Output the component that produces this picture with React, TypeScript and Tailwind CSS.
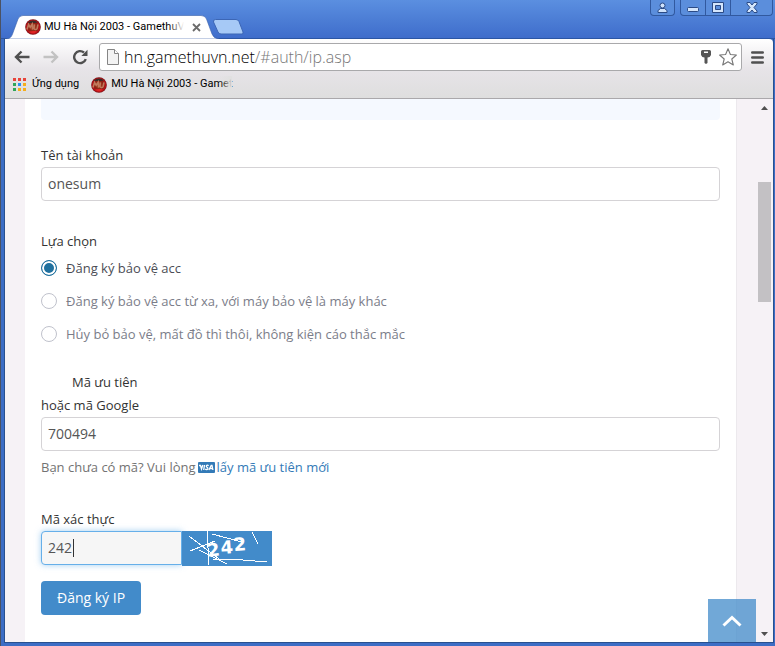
import { useState } from 'react'
import type { ReactNode } from 'react'

const OPTIONS = [
  'Đăng ký bảo vệ acc',
  'Đăng ký bảo vệ acc từ xa, với máy bảo vệ là máy khác',
  'Hủy bỏ bảo vệ, mất đồ thì thôi, không kiện cáo thắc mắc',
]

const APP_DOTS = [
  '#e8443a', '#e8443a', '#e8443a',
  '#2fa558', '#2b8ff0', '#f5ae1c',
  '#2fa558', '#f5ae1c', '#f5ae1c',
]

function SiteIcon() {
  return (
    <svg width="16" height="16" viewBox="0 0 16 16" className="shrink-0" aria-hidden="true">
      <defs>
        <radialGradient id="ember" cx="50%" cy="50%" r="50%">
          <stop offset="0" stopColor="#b04a20" />
          <stop offset="0.6" stopColor="#8a2014" />
          <stop offset="0.85" stopColor="#b8141a" />
          <stop offset="1" stopColor="#6e0c10" />
        </radialGradient>
      </defs>
      <circle cx="8" cy="8" r="7.8" fill="url(#ember)" />
      <path d="M2.500 4C5 .8 10 .6 13 3.500 10 4.400 6 3.600 2.500 4Z" fill="#3a2c28" />
      <path d="M2 10.500 3.600 5.500 5.200 8.300 7.200 5.200 7.600 10.600M9.400 5.400 9 9.400C9.400 11 11.600 11 12.200 9.200L13 5.400" fill="none" stroke="#c07a5c" strokeWidth="1.600" />
      <path d="M4 12.600C6.500 11.800 10 12 12 12.400 10 14.600 6 14.800 4 12.600Z" fill="#e02424" />
    </svg>
  )
}

function NavButton({ label, children }: { label: string; children: ReactNode }) {
  return (
    <button type="button" aria-label={label} className="flex h-5 w-5 shrink-0 items-center justify-center">
      {children}
    </button>
  )
}

function TitleBar() {
  return (
    <header className="flex h-[39px] justify-between border-b border-[#2c56a4] bg-linear-to-b from-[#5b8fe0] to-[#3f6dcb] pl-1">
      <div className="flex pt-[15px]">
        {/* Active tab */}
        <div className="relative -mb-px flex h-6 w-[214px] items-center gap-[3px] pl-5">
          <svg className="absolute inset-0" width="214" height="24" viewBox="0 0 214 24" aria-hidden="true">
            <path d="M0 24C4 24 6 23 7.500 19L13 4Q14.500.5 18 .5H196Q200 .5 201.500 4L207 19Q208.500 23.500 214 24Z" fill="#fff" stroke="#3960a9" strokeWidth="0.6" />
          </svg>
          <div className="relative"><SiteIcon /></div>
          <span className="relative w-[140px] font-['Roboto',sans-serif] text-[11px] whitespace-nowrap text-black">
            MU Hà Nội 2003 - GamethuVN
            <span className="absolute inset-y-0 -right-4 w-8 bg-linear-to-r from-transparent to-white to-50%" />
          </span>
          <button type="button" aria-label="Close tab" className="relative ml-px p-1">
            <svg width="9" height="9" viewBox="0 0 9 9"><path d="M1 1 8 8M8 1 1 8" stroke="#6b6b6b" strokeWidth="1.800" /></svg>
          </button>
        </div>
        <button type="button" aria-label="New tab" className="-ml-[7px] self-start pt-1">
          <svg width="32" height="16" viewBox="0 0 32 16">
            <path d="M3.500.5H24Q26 .5 27 2.500L31 13Q31.500 15 30 15H9Q7 15 6 13L1.500 3Q1 .5 3.500.5Z" fill="#a6c9f6" stroke="#3c66b5" />
          </svg>
        </button>
      </div>

      {/* Window controls */}
      <div className="flex h-4 gap-[5px] pr-0.5">
        <button type="button" aria-label="Profile" className="flex w-[25px] items-center justify-center rounded-b border border-t-0 border-[#31599f] bg-[#5b8edc]">
          <svg width="11" height="11" viewBox="0 0 11 11" fill="#cfe2fb" stroke="#2b4a85">
            <path d="M1 10.500V8.500L3.500 6.500H7.500L10 8.500V10.500Z" />
            <circle cx="5.500" cy="3.500" r="2.500" />
          </svg>
        </button>
        <div className="flex rounded-b border border-t-0 border-[#31599f] bg-[#5b8edc]">
          <button type="button" aria-label="Minimize" className="flex w-[25px] items-end justify-center border-r border-[#31599f] pb-[3px]">
            <svg width="12" height="5" viewBox="0 0 12 5"><rect x=".5" y=".5" width="11" height="4" rx="1" fill="#d5e6fc" stroke="#2b4a85" /></svg>
          </button>
          <button type="button" aria-label="Maximize" className="flex w-[25px] items-center justify-center border-r border-[#31599f]">
            <svg width="12" height="11" viewBox="0 0 12 11">
              <path d="M.5.5H11.500V10.500H.5ZM3.500 3.500V7.500H8.500V3.500Z" fill="#d5e6fc" fillRule="evenodd" stroke="#2b4a85" />
            </svg>
          </button>
          <button type="button" aria-label="Close" className="flex w-[41px] items-center justify-center">
            <svg width="12" height="11" viewBox="0 0 12 11">
              <path d="M1 .5H4L6 3 8 .5H11V2L8 5.500 11 9V10.500H8L6 8 4 10.500H1V9L4 5.500 1 2Z" fill="#d5e6fc" stroke="#2b4a85" />
            </svg>
          </button>
        </div>
      </div>
    </header>
  )
}

function Toolbar() {
  return (
    <nav className="flex h-8 items-end gap-[5px] pr-[9px] pl-[7px]">
      <div className="flex h-7 items-center gap-[9px]">
        <NavButton label="Back">
          <svg width="16" height="14" viewBox="0 0 16 14" fill="none" stroke="#505050" strokeWidth="2.400"><path d="M7.500 1.500 2 7 7.500 12.500M2 7H15.500" /></svg>
        </NavButton>
        <NavButton label="Forward">
          <svg width="16" height="14" viewBox="0 0 16 14" fill="none" stroke="#c2c2c2" strokeWidth="2.400"><path d="M8.500 1.500 14 7 8.500 12.500M14 7H.5" /></svg>
        </NavButton>
        <NavButton label="Reload">
          <svg width="16" height="16" viewBox="0 0 16 16">
            <path d="M13.800 10.200A6 6 0 1 1 12 3.500" fill="none" stroke="#505050" strokeWidth="2.400" />
            <path d="M15.500.8V7H9.300Z" fill="#505050" />
          </svg>
        </NavButton>
      </div>
      <div className="ml-1 flex h-7 min-w-0 grow items-center rounded-[3px] border border-[#a9a9ab] bg-white pr-1 pl-[7px]">
        <svg width="12" height="16" viewBox="0 0 12 16" className="shrink-0" aria-hidden="true">
          <path d="M.5.5H7.500L11.500 4.500V15.500H.5Z" fill="#f3f3f3" stroke="#858585" />
          <path d="M7.500.5V4.500H11.500" fill="#fff" stroke="#858585" />
        </svg>
        <p className="ml-[5px] min-w-0 grow font-['Open_Sans',sans-serif] text-[16px] font-light whitespace-nowrap text-[#777]">
          <span className="text-black">hn.gamethuvn.net</span>/#auth/ip.asp
        </p>
        <button type="button" aria-label="Saved password" className="mr-2">
          <svg width="10" height="14" viewBox="0 0 10 14">
            <path d="M1.500 0H8.500Q10 0 10 1.500V5Q9 7.500 6.500 7.500V13L5 14 3.500 13V7.500Q1 7.500 0 5V1.500Q0 0 1.500 0ZM3 1.500V3H7V1.500Z" fill="#555" fillRule="evenodd" />
          </svg>
        </button>
        <button type="button" aria-label="Bookmark this page">
          <svg width="18" height="18" viewBox="0 0 18 18">
            <path d="M9 .8 11.400 6.500 17.400 7 12.800 11 14.300 17 9 13.800 3.700 17 5.200 11 .6 7 6.600 6.500Z" fill="#fff" stroke="#777" strokeWidth="1.100" strokeLinejoin="round" />
          </svg>
        </button>
      </div>
      <button type="button" aria-label="Menu" className="ml-1 flex h-7 items-center">
        <svg width="13" height="13" viewBox="0 0 13 13" stroke="#505050" strokeWidth="2.600" strokeLinecap="round"><path d="M1.300 1.500H11.700M1.300 6.500H11.700M1.300 11.500H11.700" /></svg>
      </button>
    </nav>
  )
}

function BookmarksBar() {
  return (
    <nav className="flex h-7 items-center gap-3 border-b border-[#aaa8ab] pl-2 font-['Roboto',sans-serif] text-[11px] text-black">
      <a href="#apps" className="flex items-center gap-[6px]">
        <svg width="13" height="13" viewBox="0 0 13 13" aria-hidden="true">
          {APP_DOTS.map((fill, i) => (
            <rect key={i} x={(i % 3) * 5} y={Math.floor(i / 3) * 5} width="3" height="3" fill={fill} />
          ))}
        </svg>
        Ứng dụng
      </a>
      <a href="#home" className="flex items-center gap-1">
        <SiteIcon />
        <span className="relative whitespace-nowrap">
          MU Hà Nội 2003 - Gamet
          <span className="absolute inset-y-0 right-0 w-3 bg-linear-to-r from-transparent to-[#e0e0e0]" />
        </span>
      </a>
    </nav>
  )
}

function Captcha() {
  return (
    <svg width="90" height="35" viewBox="0 0 90 35" className="shrink-0 bg-[#428bca]" role="img" aria-label="242">
      <g fill="#fff" fontFamily="DejaVu Sans, sans-serif" fontWeight="bold" fontSize="18">
        <text x="26" y="26" transform="rotate(-8 26 26)">2</text>
        <text x="39" y="23" transform="rotate(-4 39 23)">4</text>
        <text x="52" y="20" transform="rotate(-4 52 20)">2</text>
      </g>
      <path d="M7 5 37 28M8 20 33 10M25 0 27 34M30 3 60 11M17 19 45 33M31 28 61 29 85 31M70 1 76 13" fill="none" stroke="#fff" shapeRendering="crispEdges" />
    </svg>
  )
}

function ScrollBar() {
  return (
    <div className="flex w-[17px] shrink-0 flex-col items-center justify-between py-1.5 pr-px" role="presentation">
      <div className="flex flex-col items-center pt-px">
        <svg width="7" height="4" viewBox="0 0 7 4"><path d="M3.500 0 7 4H0Z" fill="#505050" /></svg>
        <div className="mt-[72px] h-[120px] w-[13px] bg-[#c3c1c4]" />
      </div>
      <svg width="7" height="4" viewBox="0 0 7 4"><path d="M0 0H7L3.500 4Z" fill="#505050" /></svg>
    </div>
  )
}

const fieldClass =
  'block h-[34px] rounded border px-1.5 pb-0.5 text-[14px] text-[#555] outline-none'

export default function App() {
  const [choice, setChoice] = useState(0)
  const [account, setAccount] = useState('onesum')
  const [code, setCode] = useState('700494')
  const [captcha, setCaptcha] = useState('242')

  return (
    <div className="relative flex min-h-screen flex-col border-l border-[#4b5263] bg-[#3c6dc5]">
      <TitleBar />
      <div className="mr-px mb-[3px] ml-[3px] flex grow flex-col border-x border-b border-[#28508f]">
        <div className="rounded-tr bg-linear-to-b from-white via-[#e7e4e8] to-[#dedede]">
          <Toolbar />
          <BookmarksBar />
        </div>

        <div className="flex grow bg-[#f6f2f6]">
          <main className="mr-[19px] ml-5 grow border-r border-[#ece9ed] bg-white px-4 pb-[27px] font-['Open_Sans',sans-serif] text-[13px] leading-[23px] text-[#333]">
            <div className="h-[21px] rounded-b bg-[#f5f9ff]" />

            <form className="mt-6" onSubmit={e => e.preventDefault()}>
              <div className="mb-[29px]">
                <label htmlFor="account" className="block">Tên tài khoản</label>
                <input id="account" value={account} onChange={e => setAccount(e.target.value)} className={`${fieldClass} w-full border-[#d5d3d6]`} />
              </div>

              <fieldset className="mb-[25px]">
                <legend>Lựa chọn</legend>
                <div className="flex flex-col gap-[9px] pt-[3px]">
                  {OPTIONS.map((text, i) => (
                    <label key={text} className={`flex h-6 items-center gap-[9px] ${choice === i ? 'text-[#4b4d55]' : 'text-[#7b7d89]'}`}>
                      <input
                        type="radio"
                        name="choice"
                        checked={choice === i}
                        onChange={() => setChoice(i)}
                        className="h-4 w-4 shrink-0 appearance-none rounded-full border border-[#c0c2cc] bg-white checked:border-[#20719f] checked:bg-[#20719f] checked:shadow-[inset_0_0_0_2px_white]"
                      />
                      {text}
                    </label>
                  ))}
                </div>
              </fieldset>

              <div className="mb-[29px]">
                <label htmlFor="code" className="block">
                  <span className="ml-[31px]">Mã ưu tiên</span>
                  <br />
                  hoặc mã Google
                </label>
                <input id="code" value={code} onChange={e => setCode(e.target.value)} className={`${fieldClass} w-full border-[#d5d3d6]`} />
                <p className="mt-[5px] flex items-center gap-0.5 text-[#737373]">
                  Bạn chưa có mã? Vui lòng
                  <a href="#code" className="flex items-center gap-0.5 text-[#337ab7]">
                    <svg width="17" height="11" viewBox="0 0 17 11" aria-hidden="true">
                      <rect width="17" height="11" rx="1" fill="#337ab7" />
                      <path d="M1 3.500H2.500L3.500 7 4.800 3M6.500 3 5.700 8M10.600 3.700C9.400 2.600 7.800 3.600 8.500 4.700 8.900 5.400 10.100 5.500 9.800 6.700 9.400 7.800 7.800 7.600 7.200 7.100M10.900 8 13.200 3.400H14L14.900 8M12 6.500H14.700" fill="none" stroke="#fff" strokeWidth="1.300" />
                    </svg>
                    lấy mã ưu tiên mới
                  </a>
                </p>
              </div>

              <div className="mb-[15px]">
                <label htmlFor="captcha" className="block">Mã xác thực</label>
                <div className="flex">
                  <div className="relative">
                    <input
                      id="captcha"
                      value={captcha}
                      onChange={e => setCaptcha(e.target.value)}
                      className={`${fieldClass} w-[141px] rounded-r-none border-[#66afe9] bg-[#f6f6f6] caret-transparent shadow-[0_0_6px_rgba(102,175,233,0.6)]`}
                    />
                    <span className="absolute top-2 left-8 h-[18px] w-px bg-[#333]" />
                  </div>
                  <div className="relative"><Captcha /></div>
                </div>
              </div>

              <button type="submit" className="h-[34px] rounded bg-[#428bca] px-4 pb-0.5 text-[14px] font-medium text-white">
                Đăng ký IP
              </button>
            </form>
          </main>
          <ScrollBar />
        </div>
      </div>

      {/* Back to top */}
      <a href="#top" aria-label="Back to top" className="absolute right-[19px] bottom-1 flex h-[43px] w-12 items-center justify-center bg-[#428bca]/75">
        <svg width="20" height="12" viewBox="0 0 20 12" fill="none" stroke="#fff" strokeWidth="3"><path d="M1.500 10.500 10 2.500 18.500 10.500" /></svg>
      </a>
    </div>
  )
}
